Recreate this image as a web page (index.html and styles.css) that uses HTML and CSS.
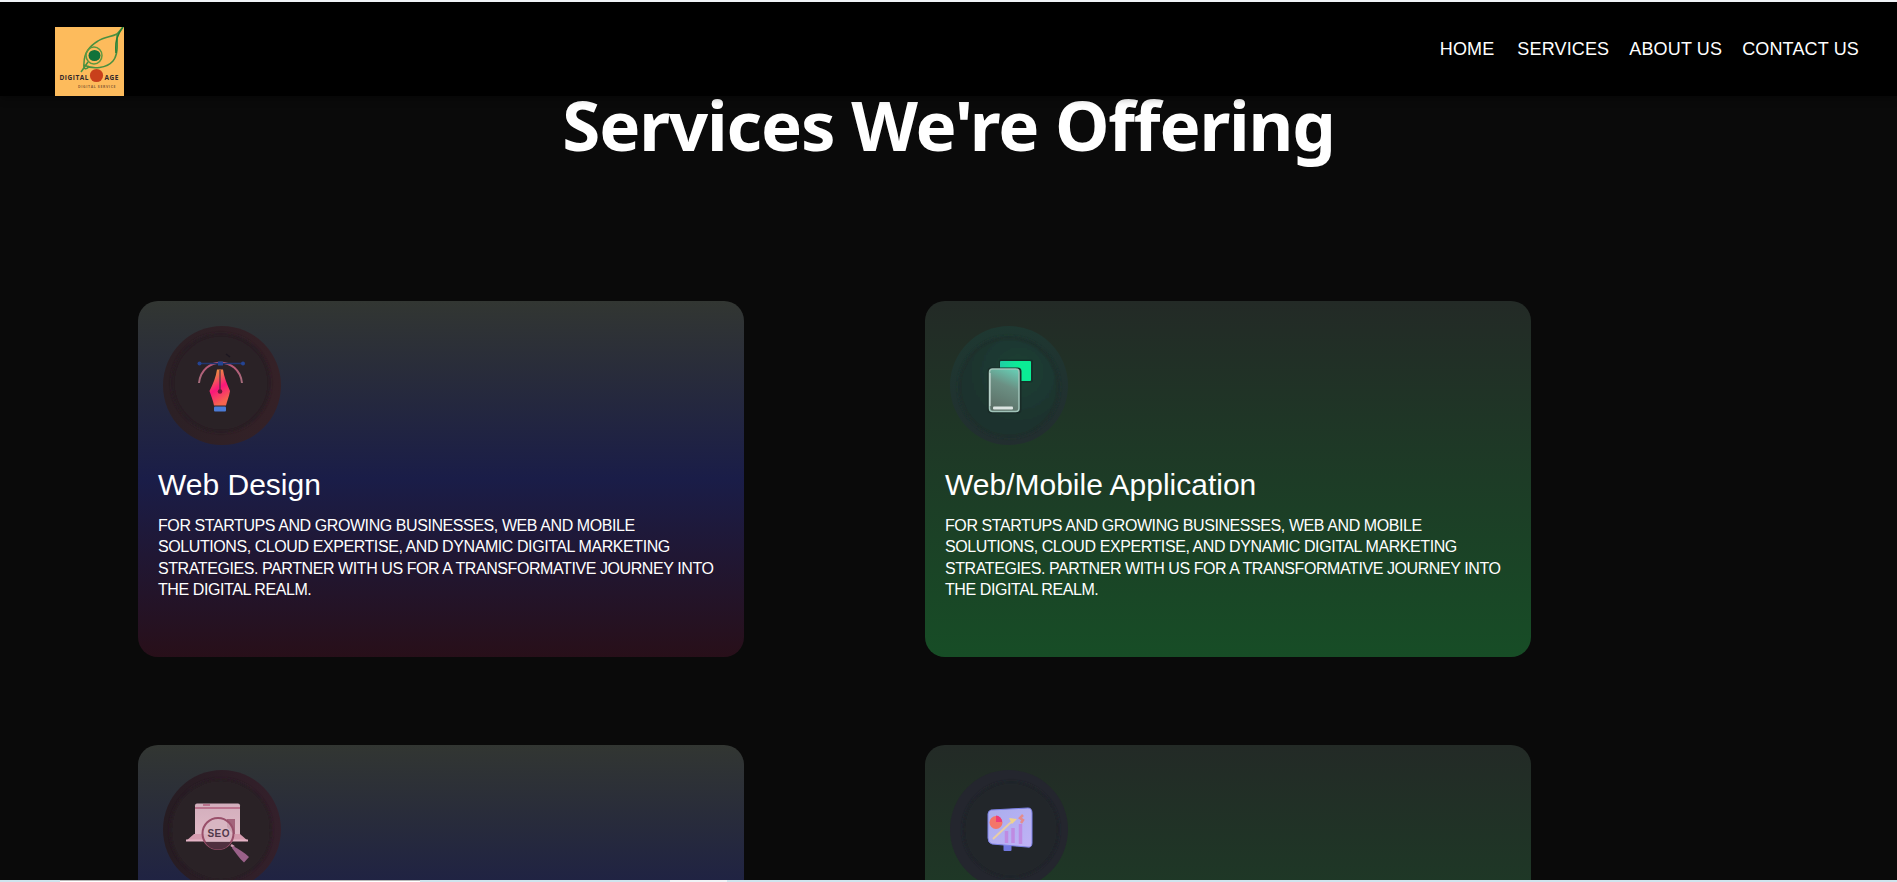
FILE: index.html
```html
<!DOCTYPE html>
<html lang="en">
<head>
<meta charset="utf-8">
<title>Digital Age</title>
<link rel="stylesheet" href="styles.css">
</head>
<body>
<div class="edge-top"></div>
<header class="header">
  <svg class="logo" viewBox="0 0 69 69">
    <rect width="69" height="69" fill="#fdbb5c"/>
    <g fill="none" stroke="#4a9040" stroke-width="1.5">
      <path d="M62 7C56 10 49 10 43 14C33 20 29 27 29 36C28 42 31 44 34 39"/>
      <path d="M29 38C38 43 52 41 58 34C64 27 62 14 62 7L68 0"/>
      <path d="M26 45L33 35"/>
      <ellipse cx="39" cy="28.500" rx="8" ry="8.500" stroke="#5d9840"/>
      <path d="M68 0C62 8 60 14 61 26" stroke="#248038"/>
    </g>
    <ellipse cx="39.5" cy="28.500" rx="6" ry="5.500" fill="#11723a"/>
    <circle cx="41.5" cy="48.500" r="6.600" fill="#c8401b"/>
    <text class="logo-name" x="4.500" y="52.500" textLength="29">DIGITAL</text>
    <text class="logo-name" x="49.500" y="52.500" textLength="14">AGE</text>
    <text class="logo-sub" x="23" y="60.500" textLength="37.500">DIGITAL SERVICE</text>
  </svg>
  <nav class="nav">
    <a class="link home">HOME</a><a class="link">SERVICES</a><a class="link">ABOUT US</a><a class="link">CONTACT US</a>
  </nav>
</header>
<main class="main">
  <h1 class="heading">Services We're Offering</h1>
  <section class="cards">
    <article class="card card-blue">
      <svg class="icon" viewBox="0 0 118 119">
        <defs>
          <linearGradient id="nib" x1="0" y1="0" x2=".35" y2="1"><stop offset="0" stop-color="#f0a63b"/><stop offset=".3" stop-color="#ef6a50"/><stop offset=".6" stop-color="#fa167b"/><stop offset="1" stop-color="#f5644f"/></linearGradient>
          <linearGradient id="ring1"><stop offset="0" stop-color="#2b2025"/><stop offset="1" stop-color="#352127"/></linearGradient>
          <linearGradient id="arc" x1="0" y1="0" x2="0" y2="1"><stop offset="0" stop-color="#bd5577"/><stop offset="1" stop-color="#a46d7b"/></linearGradient>
          <filter id="soft"><feGaussianBlur stdDeviation="1.5"/></filter>
        </defs>
        <ellipse cx="59" cy="59.500" rx="59" ry="59.500" fill="url(#ring1)"/>
        <circle cx="58" cy="57" r="48" fill="#2b2026" stroke="#271c21" stroke-width="3" filter="url(#soft)"/>
        <path d="M36 57C39 30 76 30 79 57" fill="none" stroke="url(#arc)" stroke-width="2"/>
        <path d="M36 37.500H80" stroke="#20366f" stroke-width="1.3"/>
        <g fill="#244493"><circle cx="36.500" cy="37.500" r="2"/><circle cx="80" cy="37.500" r="2"/><rect x="55" y="35.500" width="5" height="4"/></g>
        <path d="M54 43.500H60C61 51 64 58 67 65C66 71 64 75 63 79.500H51C50 74 48 70 46.500 65C50 58 53 51 54 43.500Z" fill="url(#nib)"/>
        <path d="M57 44V64" stroke="#493042" stroke-width="1.2"/>
        <circle cx="57" cy="65.500" r="2.300" fill="#6a1738"/>
        <rect x="51" y="80.500" width="12" height="5" rx="1" fill="#4b7bd5"/>
        <path d="M63 28L67 31" stroke="#1c1720" stroke-width="1.500"/>
      </svg>
      <h2 class="title">Web Design</h2>
      <p class="copy">FOR STARTUPS AND GROWING BUSINESSES, WEB AND MOBILE<br>SOLUTIONS, CLOUD EXPERTISE, AND DYNAMIC DIGITAL MARKETING<br>STRATEGIES. PARTNER WITH US FOR A TRANSFORMATIVE JOURNEY INTO<br>THE DIGITAL REALM.</p>
    </article>
    <article class="card card-green">
      <svg class="icon" viewBox="0 0 118 119">
        <defs>
          <linearGradient id="ring2" x1=".3" y1="0" x2=".5" y2="1"><stop offset="0" stop-color="#1e3831"/><stop offset="1" stop-color="#222e2f"/></linearGradient>
          <radialGradient id="disc2" cx=".6" cy=".35"><stop offset="0" stop-color="#1b4034"/><stop offset="1" stop-color="#1f332e"/></radialGradient>
          <linearGradient id="screen"><stop offset="0" stop-color="#20cda5"/><stop offset=".6" stop-color="#0bed95"/></linearGradient>
          <linearGradient id="phone" x1=".7" y1="0" x2=".4" y2="1"><stop offset="0" stop-color="#67c8b0"/><stop offset=".4" stop-color="#6b8f83"/><stop offset="1" stop-color="#5c7067"/></linearGradient>
        </defs>
        <ellipse cx="59" cy="59.500" rx="59" ry="59.500" fill="url(#ring2)"/>
        <circle cx="59" cy="61" r="49" fill="url(#disc2)" stroke="#1c2d29" stroke-width="3" filter="url(#soft)"/>
        <rect x="49" y="33.500" width="34" height="23" rx="2" fill="#16312b"/>
        <rect x="50" y="35" width="31" height="20" rx="1" fill="url(#screen)"/>
        <rect x="37.500" y="41.500" width="34" height="46" rx="4" fill="#182b27"/>
        <rect x="39.500" y="43" width="29.500" height="42.500" rx="3" fill="url(#phone)" stroke="#a0c4b9" stroke-width="1.500"/>
        <path d="M40 47V80" stroke="#d0ded9" stroke-width="1"/>
        <rect x="43" y="80.500" width="20" height="3" rx="1" fill="#dce5e2"/>
      </svg>
      <h2 class="title">Web/Mobile Application</h2>
      <p class="copy">FOR STARTUPS AND GROWING BUSINESSES, WEB AND MOBILE<br>SOLUTIONS, CLOUD EXPERTISE, AND DYNAMIC DIGITAL MARKETING<br>STRATEGIES. PARTNER WITH US FOR A TRANSFORMATIVE JOURNEY INTO<br>THE DIGITAL REALM.</p>
    </article>
    <article class="card card-blue">
      <svg class="icon" viewBox="0 0 118 119">
        <defs>
          <linearGradient id="ring3"><stop offset="0" stop-color="#261c22"/><stop offset="1" stop-color="#34202b"/></linearGradient>
          <linearGradient id="lap" x1="0" y1="0" x2="0" y2="1"><stop offset="0" stop-color="#d2aebc"/><stop offset="1" stop-color="#e1bac7"/></linearGradient>
        </defs>
        <ellipse cx="59" cy="59.500" rx="59" ry="59.500" fill="url(#ring3)"/>
        <circle cx="58" cy="60" r="50" fill="#292126" stroke="#261b21" stroke-width="2" filter="url(#soft)"/>
        <rect x="32" y="33.500" width="45" height="34" rx="2" fill="url(#lap)"/>
        <path d="M32 38H77M40 35H47" stroke="#b2607e" stroke-width="1.700"/>
        <path d="M64 49H72V66L64 57Z" fill="#a4647c"/>
        <path d="M31 64L23 71H85L77 64Z" fill="#d59caf"/>
        <path d="M23 70.500H85" stroke="#e5b4c6" stroke-width="2"/>
        <circle cx="55" cy="63.500" r="15.500" fill="#d7b6c2" fill-opacity=".75" stroke="#994f6a" stroke-width="2"/>
        <path d="M42 72A15 15 0 0 0 68 72Z" fill="#50303f"/>
        <path d="M68 75L71 77" stroke="#d5a0b6" stroke-width="2.500"/>
        <path d="M70 76C76 79 82 83 86 87L81 92.500C76 88 72 82 69 78Z" fill="#9a6189"/>
        <text class="seo" x="44.500" y="67" textLength="22">SEO</text>
      </svg>
    </article>
    <article class="card card-green">
      <svg class="icon" viewBox="0 0 118 119">
        <defs><linearGradient id="board" x1="0" y1="0" x2="1" y2="1"><stop offset="0" stop-color="#a9aeed"/><stop offset="1" stop-color="#c0b2f6"/></linearGradient></defs>
        <ellipse cx="59" cy="59.500" rx="59" ry="59.500" fill="#24262e"/>
        <circle cx="61" cy="59.500" r="47" fill="#21262c" stroke="#1d2025" stroke-width="2" filter="url(#soft)"/>
        <rect x="53.500" y="73" width="8" height="8" rx="1" fill="#7178df"/>
        <path d="M41 40L78 38Q82 38 82 43V73Q82 78 77 77L42 74Q38 73 38 68V44Q38 41 41 40Z" fill="url(#board)" stroke="#7d82e5" stroke-width="1"/>
        <circle cx="46" cy="52.500" r="6.500" fill="#f47668"/>
        <path d="M46 45.500A6.500 6.500 0 0 1 52 52L46 52Z" fill="#ee3c78"/>
        <g stroke="#bf8be2" stroke-width="3.500"><path d="M56.500 61V73M63 58V73M70.500 54V74"/></g>
        <path d="M43 69L59 54L63 51" fill="none" stroke="#e8cda5" stroke-width="2"/>
        <path d="M59 48L67 49L62 54Z" fill="#f0d38b"/>
        <path d="M73 45L70 48L73 50L71 53" fill="none" stroke="#e58c8d" stroke-width="2.500"/>
      </svg>
    </article>
  </section>
</main>
<div class="edge-bottom"><span class="edge-tab"></span><span class="edge-item"></span></div>
</body>
</html>
```
FILE: styles.css
```css
* { box-sizing: border-box; }
body {
  margin: 0;
  height: 882px;
  overflow: hidden;
  display: flex;
  flex-direction: column;
  background: #0a0a0a;
  color: #fff;
  font-family: "Liberation Sans", Arial, sans-serif;
}
.edge-top { flex: none; height: 2px; background: #f0f3f7; position: relative; z-index: 2; }
.header {
  flex: none;
  height: 94px;
  background: #000;
  display: flex;
  justify-content: space-between;
  align-items: flex-start;
  padding: 25px 38px 0 55px;
  position: relative;
  z-index: 1;
  box-shadow: 0 2px 8px rgba(0, 0, 0, .4);
}
.logo { width: 69px; height: 69px; display: block; }
.logo-name { font: bold 6.5px "Open Sans", sans-serif; fill: #33272a; }
.logo-sub { font: bold 3.5px "Open Sans", sans-serif; fill: #8a5b35; }
.nav { display: flex; padding-top: 11px; gap: 20px; }
.link { font-size: 18px; line-height: 22px; letter-spacing: .15px; white-space: nowrap; }
.home { margin-right: 3px; }
.main { flex: 1; min-height: 0; overflow: hidden; margin-top: -20px; }
.heading {
  margin: 0;
  height: 225px;
  font: bold 69px/96px "Noto Sans", "Open Sans", sans-serif;
  letter-spacing: -1.17px;
  text-align: center;
  white-space: nowrap;
}
.cards {
  display: grid;
  grid-template-columns: 606px 606px;
  grid-auto-rows: 356px;
  gap: 88px 181px;
  padding-left: 138px;
}
.card { border-radius: 20px; padding: 25px 20px; }
.card-blue { background: linear-gradient(#323632, #1a1d48 50%, #280f19); }
.card-green { background: linear-gradient(#232a26, #174d26); }
.icon { display: block; width: 118px; height: 119px; margin-left: 5px; }
.title { margin: 22px 0 0; font-size: 30px; font-weight: 400; line-height: 36px; }
.copy { margin: 12px 0 0; font-size: 16px; line-height: 21.33px; letter-spacing: -.42px; white-space: nowrap; }
.seo { font: bold 10px "Liberation Sans", sans-serif; fill: #51384a; }
.edge-bottom { flex: none; height: 2px; background: #cfe5ee; display: flex; }
.edge-tab { width: 360px; margin-left: 60px; background: #fff; border-top: 1px solid #b9b9b9; }
.edge-item { width: 57px; margin-left: 250px; background: #f0f3f6; }
```
